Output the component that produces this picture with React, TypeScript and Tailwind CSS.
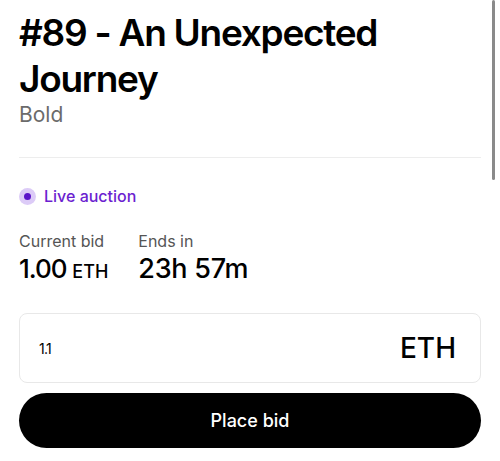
import React from 'react';

export default function App() {
  return (
    <div className="relative h-[461px] w-[500px] overflow-hidden bg-white text-black" style={{ fontFamily: 'Inter, "Liberation Sans", sans-serif' }}>
      {/* scroll indicator */}
      <div className="absolute right-[5px] top-0 h-[180px] w-[3px] rounded-full bg-[#8a8a8a]" />
      <div className="flex flex-col px-[19px] pt-[10px]">
        <h1 className="text-[37px] font-semibold leading-[46px] tracking-[-0.034em]">#89 - An Unexpected Journey</h1>
        <p className="text-[21px] leading-[26px] text-[#6b6b6b]">Bold</p>
        <div className="mt-[29px] h-px w-full bg-[#ededed]" />
        <div className="mt-[26px] flex items-center gap-[8px]">
          <span className="flex h-[17px] w-[17px] items-center justify-center rounded-full bg-[#dccbf7]">
            <span className="h-[7px] w-[7px] rounded-full bg-[#5b14c9]" />
          </span>
          <span className="text-[16px] font-medium text-[#6c1fd0]">Live auction</span>
        </div>
        <div className="mt-[23px] flex gap-[30px]">
          <div className="flex flex-col">
            <span className="text-[16px] leading-[20px] text-[#555]">Current bid</span>
            <span className="mt-[3px] text-[26px] font-medium leading-[30px] tracking-[-0.04em]">
              1.00 <span className="text-[18px] tracking-normal">ETH</span>
            </span>
          </div>
          <div className="flex flex-col">
            <span className="text-[16px] leading-[20px] text-[#555]">Ends in</span>
            <span className="mt-[3px] text-[27px] font-medium leading-[30px] tracking-[-0.01em]">23h 57m</span>
          </div>
        </div>
        <div className="mt-[26px] flex h-[70px] items-center justify-between rounded-[8px] border border-[#e8e8e8] pl-[19px] pr-[24px]">
          <span className="text-[14px] tracking-[-0.05em]">1.1</span>
          <span className="text-[28px] font-medium">ETH</span>
        </div>
        <button className="mt-[10px] flex h-[55px] items-center justify-center rounded-full bg-black text-[18px] font-medium text-white">
          Place bid
        </button>
      </div>
    </div>
  );
}
